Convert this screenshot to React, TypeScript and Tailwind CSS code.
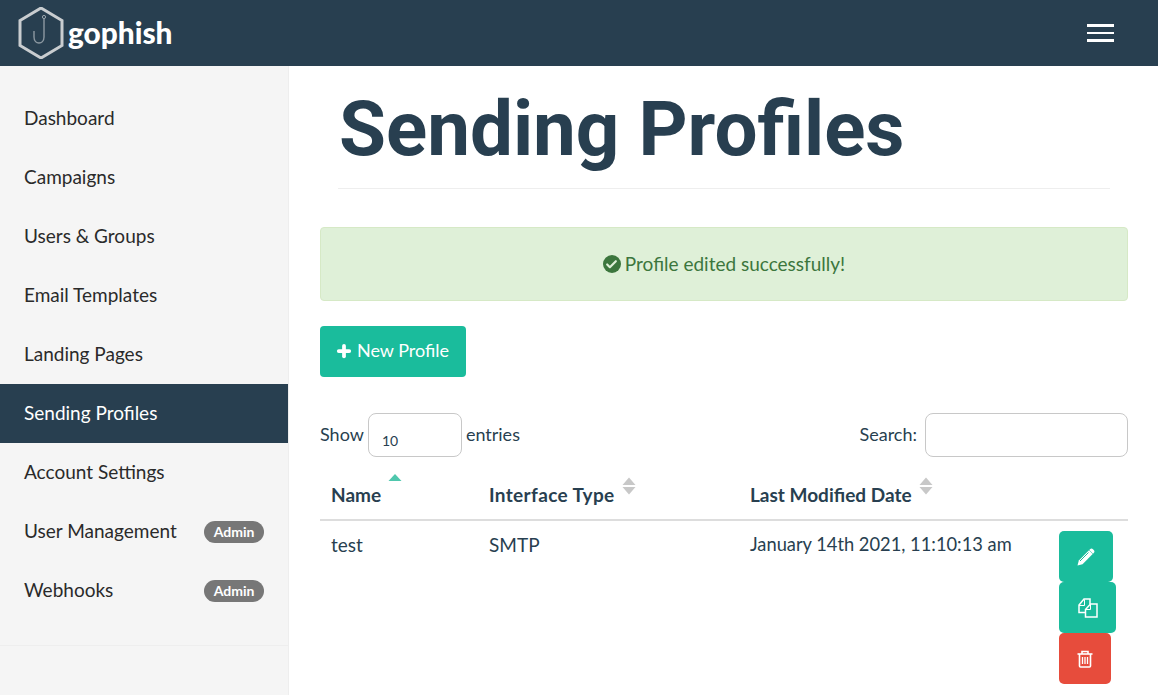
import { Check, Plus } from "lucide-react";

const nav = [
  "Dashboard",
  "Campaigns",
  "Users & Groups",
  "Email Templates",
  "Landing Pages",
  "Sending Profiles",
  "Account Settings",
  "User Management",
  "Webhooks",
];

function SortArrows({ active }: { active?: boolean }) {
  if (active) {
    return (
      <svg width="14" height="9" viewBox="0 0 14 9" className="absolute left-[68px] top-[-8px]">
        <path d="M7 1 L13.5 8 H0.5 Z" fill="#4fc7ad" />
      </svg>
    );
  }
  return (
    <svg width="14" height="18" viewBox="0 0 14 18" className="ml-[7px] mt-[-20px]">
      <path d="M7 0.5 L13.5 8 H0.5 Z" fill="#c8c8c8" />
      <path d="M0.5 10 H13.5 L7 17.5 Z" fill="#c8c8c8" />
    </svg>
  );
}

function Logo() {
  return (
    <svg width="46" height="52" viewBox="0 0 46 52" className="shrink-0">
      <path d="M23 1 L44 13.5 V38.5 L23 51 L2 38.5 V13.5 Z" fill="none" stroke="#c9cdd0" strokeWidth="3" />
      <circle cx="26" cy="10" r="1.6" fill="none" stroke="#9aa5ad" strokeWidth="1" />
      <path d="M26 12 V30 C26 38 16 38 16 30 V24" fill="none" stroke="#8d99a2" strokeWidth="1.4" />
    </svg>
  );
}

export default function App() {
  return (
    <div className="h-[695px] w-[1158px] overflow-hidden bg-white font-['Lato','Noto_Sans',sans-serif] text-[#283f50]">
      <header className="flex h-[66px] items-center justify-between bg-[#283f50] pl-[17.5px] pr-[44px]">
        <div className="flex items-center">
          <Logo />
          <span className="ml-[4.5px] mt-[1px] text-[29.8px] font-black text-white">gophish</span>
        </div>
        <div className="flex w-[27px] flex-col gap-[5px]">
          <span className="h-[3px] bg-white" />
          <span className="h-[2px] bg-white" />
          <span className="h-[3px] bg-white" />
        </div>
      </header>
      <div className="flex h-[629px]">
        <aside className="w-[289px] shrink-0 border-r border-[#eeeeee] bg-[#f5f5f5] pt-[23px]">
          <nav>
            {nav.map((item) => {
              const isActive = item === "Sending Profiles";
              const isAdmin = item === "User Management" || item === "Webhooks";
              return (
                <div
                  key={item}
                  className={`flex h-[59px] items-center justify-between px-[24px] text-[19px] ${
                    isActive ? "bg-[#283f50] text-white" : "text-[#2a2a2a]"
                  }`}
                >
                  <span>{item}</span>
                  {isAdmin && (
                    <span className="w-[60px] rounded-full bg-[#777777] py-[1px] text-center text-[14px] leading-[20px] font-bold text-white">
                      Admin
                    </span>
                  )}
                </div>
              );
            })}
          </nav>
          <div className="mt-[25px] border-t border-[#eeeeee]" />
          <div className="mt-[27px] flex h-[59px] items-center px-[24px] text-[19px] text-[#2a2a2a]">User Guide</div>
        </aside>
        <main className="min-w-0 flex-1 pl-[31px] pr-[30px]">
          <div className="mx-[18px] border-b border-[#eeeeee] pb-[5px] pt-[10px] pl-[1px]">
            <h1 className="font-['Roboto',sans-serif] text-[76.3px] leading-[107px] font-bold text-[#283f50]">
              Sending Profiles
            </h1>
          </div>
          <div className="mt-[38px] flex h-[74px] items-center justify-center gap-[4px] rounded-[4px] border border-[#d6e9c6] bg-[#dff0d8] text-[19px] text-[#3c763d]">
            <span className="flex h-[18px] w-[18px] items-center justify-center rounded-full bg-[#3c763d]">
              <Check size={13} strokeWidth={4} className="text-[#dff0d8]" />
            </span>
            Profile edited successfully!
          </div>
          <button className="mt-[25px] flex h-[51px] w-[146px] items-center justify-center gap-[4px] rounded-[4px] bg-[#1abc9c] pb-[2px] text-[18px] text-white">
            <Plus size={18} strokeWidth={5} className="ml-[-2px]" />
            New Profile
          </button>
          <div className="mt-[36px] flex h-[44px] items-center justify-between pb-[2px] text-[18px]">
            <div className="flex items-center">
              <span>Show</span>
              <div className="mx-[4px] mb-[-2px] h-[44px] w-[94px] rounded-[8px] border border-[#c8c8c8] pl-[13px] pt-[15px] text-[14px] leading-[24px]">
                10
              </div>
              <span>entries</span>
            </div>
            <div className="flex items-center gap-[8px]">
              <span>Search:</span>
              <div className="mb-[-2px] h-[44px] w-[203px] rounded-[8px] border border-[#c8c8c8]" />
            </div>
          </div>
          <div className="mt-[19px]">
            <div className="flex h-[45px] items-center border-b-2 border-[#dddddd] pb-[4px] text-[19px] font-bold">
              <div className="relative flex w-[158px] items-center pl-[11px]">
                Name
                <SortArrows active />
              </div>
              <div className="flex w-[261px] items-center pl-[11px]">
                <span className="tracking-[0.35px]">Interface Type</span>
                <SortArrows />
              </div>
              <div className="flex items-center pl-[11px]">
                Last Modified Date
                <SortArrows />
              </div>
            </div>
            <div className="flex text-[19px]">
              <div className="w-[158px] pl-[11px] pt-[10px]">test</div>
              <div className="w-[261px] pl-[11px] pt-[10px]">SMTP</div>
              <div className="w-[320px] pl-[11px] pt-[10px] text-[18.3px]">January 14th 2021, 11:10:13 am</div>
              <div className="flex flex-col pt-[10px]">
                <button className="flex h-[51px] w-[54px] items-center justify-center rounded-[5px] bg-[#1abc9c]">
                  <svg width="18" height="18" viewBox="0 0 18 18">
                    <path d="M0.5 17.5 L1.8 12.5 L12 2.3 L15.7 6 L5.5 16.2 Z" fill="white" />
                    <path d="M13 1.3 C14 0.3 15 0.3 16 1.3 L16.7 2 C17.7 3 17.7 4 16.7 5 L16 5.7 L12.3 2 Z" fill="white" />
                    <path d="M3 13 L11.5 4.5" stroke="#1abc9c" strokeWidth="1" />
                  </svg>
                </button>
                <button className="flex h-[51px] w-[57px] items-center justify-center rounded-[5px] bg-[#1abc9c]">
                  <svg width="20" height="20" viewBox="0 0 20 20" fill="none" stroke="white" strokeWidth="1.5">
                    <path d="M7.5 14.5 H1 V7 L6 1 H12 V6" />
                    <path d="M1 7.5 H6.5 V1.5" strokeWidth="1" />
                    <path d="M7.5 11.5 L12.5 6 H19 V19 H7.5 Z" />
                    <path d="M7.5 11.5 H12.5 V6" strokeWidth="1" />
                  </svg>
                </button>
                <button className="flex h-[51px] w-[52px] items-center justify-center rounded-[5px] bg-[#e74c3c]">
                  <svg width="16" height="18" viewBox="0 0 16 18" fill="none" stroke="white" strokeWidth="1.6">
                    <path d="M0.5 4 H15.5" />
                    <path d="M5 4 V1.5 H11 V4" />
                    <path d="M2.5 4 V16 Q2.5 17 3.5 17 H12.5 Q13.5 17 13.5 16 V4" />
                    <path d="M5.5 7 V14 M8 7 V14 M10.5 7 V14" strokeWidth="1.3" />
                  </svg>
                </button>
              </div>
            </div>
          </div>
        </main>
      </div>
    </div>
  );
}
